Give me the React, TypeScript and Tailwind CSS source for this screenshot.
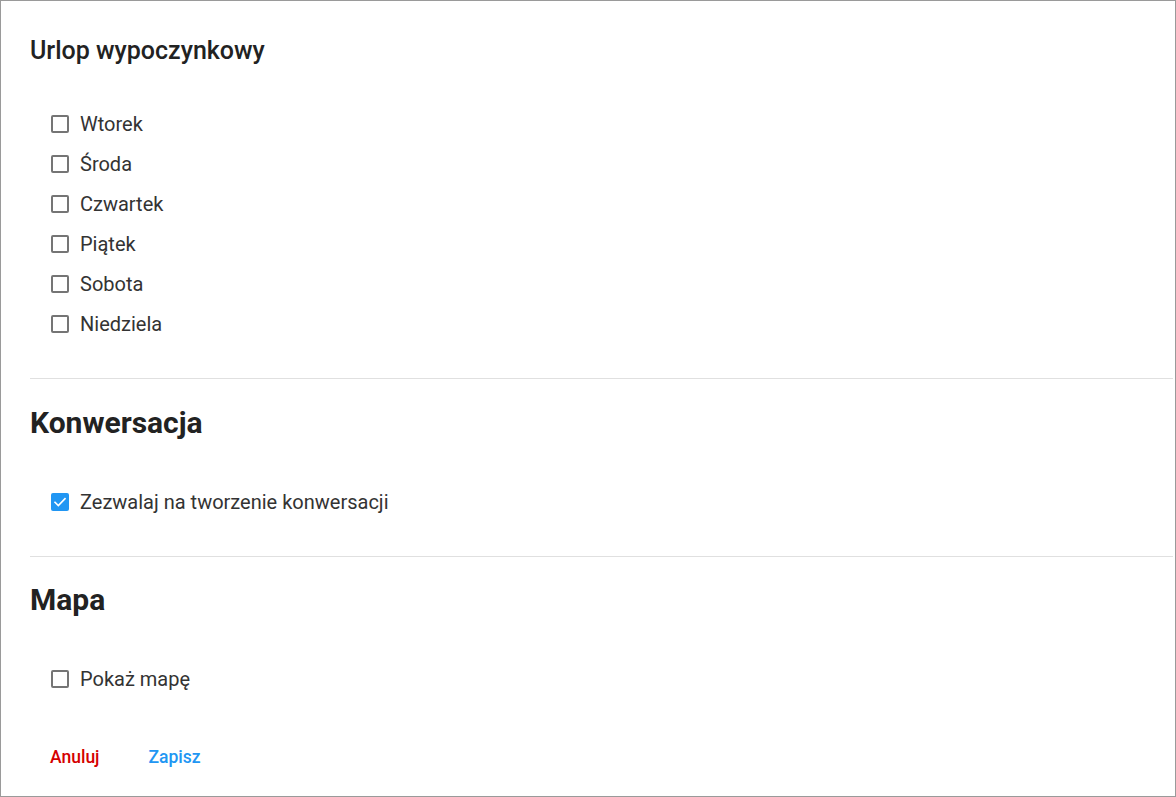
import React from "react";

const days = ["Wtorek", "Środa", "Czwartek", "Piątek", "Sobota", "Niedziela"];

function Box({ checked }: { checked?: boolean }) {
  if (checked) {
    return (
      <span className="w-[18px] h-[18px] rounded-[2px] bg-[#2196f3] flex items-center justify-center shrink-0">
        <svg width="16" height="16" viewBox="0 0 24 24" fill="none" stroke="white" strokeWidth="2.4" strokeLinecap="square">
          <path d="M4.5 12.5l5 5 10-10.5" />
        </svg>
      </span>
    );
  }
  return <span className="w-[18px] h-[18px] rounded-[2px] border-2 border-[#757575] bg-white shrink-0" />;
}

function Row({ label, checked }: { label: string; checked?: boolean }) {
  return (
    <div className="h-[40px] flex items-center pl-[21px]">
      <Box checked={checked} />
      <span className="ml-[11px] text-[20px] leading-[24px] text-[#333333]">{label}</span>
    </div>
  );
}

export default function App() {
  return (
    <div
      className="w-[1176px] h-[797px] box-border border border-[#9a9a9a] bg-white pl-[29px] pr-[2px] overflow-hidden"
      style={{ fontFamily: "Roboto, 'Noto Sans', sans-serif" }}
    >
      <div className="pt-[36px]">
        <h2 className="text-[25px] leading-[28px] font-medium text-[#222222]">Urlop wypoczynkowy</h2>
        <div className="mt-[39px]">
          {days.map((d) => (
            <Row key={d} label={d} />
          ))}
        </div>
      </div>
      <div className="mt-[34px] border-t border-[#e0e0e0]" />
      <div className="pt-[26px]">
        <h2 className="text-[30px] leading-[36px] font-bold text-[#222222]">Konwersacja</h2>
        <div className="mt-[41px]">
          <Row label="Zezwalaj na tworzenie konwersacji" checked />
        </div>
      </div>
      <div className="mt-[34px] border-t border-[#e0e0e0]" />
      <div className="pt-[25px]">
        <h2 className="text-[30px] leading-[36px] font-bold text-[#222222]">Mapa</h2>
        <div className="mt-[41px]">
          <Row label="Pokaż mapę" />
        </div>
      </div>
      <div className="mt-[46px] flex items-center h-[24px]">
        <button className="ml-[20px] text-[17.5px] leading-[24px] font-medium text-[#d50000]">Anuluj</button>
        <button className="ml-[49px] text-[17.5px] leading-[24px] font-medium text-[#2196f3]">Zapisz</button>
      </div>
    </div>
  );
}
